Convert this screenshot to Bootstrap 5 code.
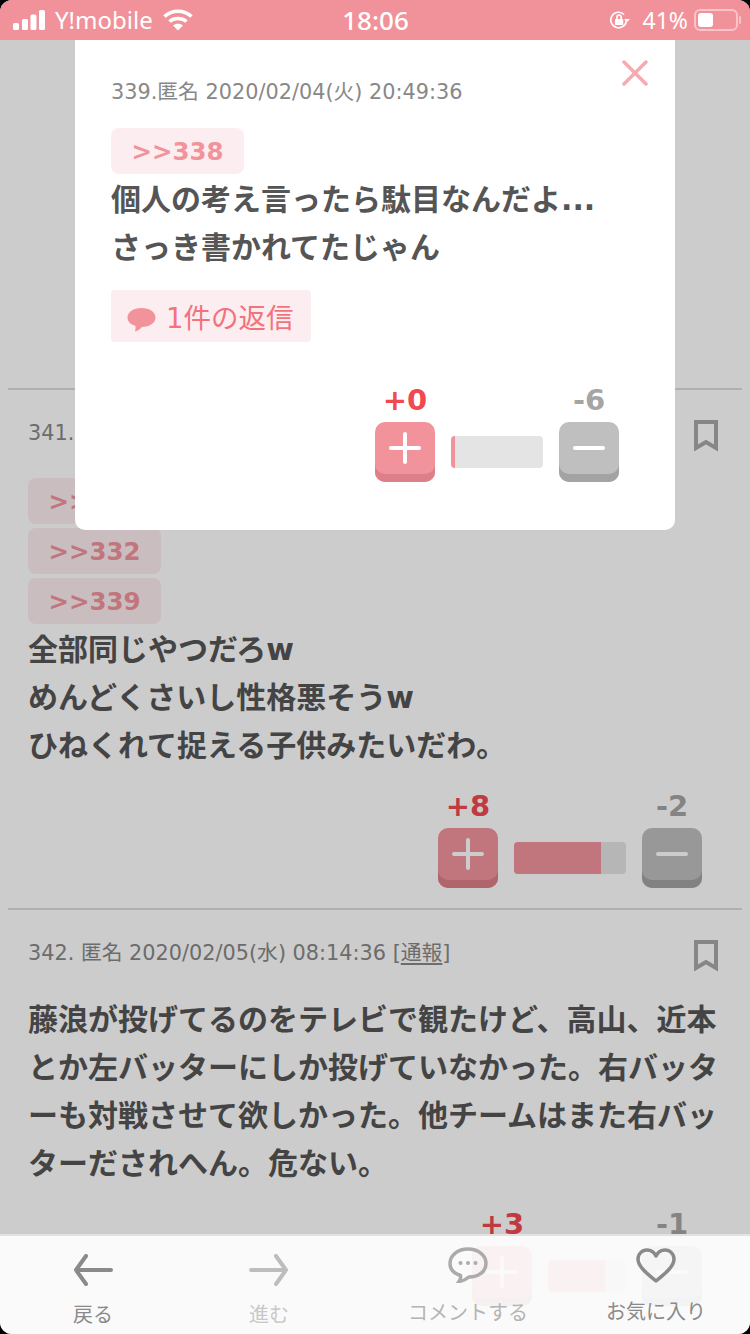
<!DOCTYPE html>
<html lang="ja">
<head>
  <title>掲示板</title>
  <meta name="viewport" content="width=device-width, initial-scale=1.0">
  <link href="https://cdn.jsdelivr.net/npm/bootstrap@5.3.0/dist/css/bootstrap.min.css" rel="stylesheet">
  <script src="https://cdn.jsdelivr.net/npm/bootstrap@5.3.0/dist/js/bootstrap.bundle.min.js"></script>
  <style>
    html, body { height: 1334px; overflow: hidden; background: #000; }
    body {
      font-family: "DejaVu Sans", "Noto Sans CJK JP", sans-serif;
      color: #555;
    }
    .app-screen {
      height: 1334px;
      position: relative;
      overflow: hidden;
      background: #fff;
      border-radius: 12px;
    }
    .status-bar {
      height: 40px;
      background: #f1929a;
      color: #fff;
      padding: 0 12px 0 13px;
      position: relative;
      z-index: 30;
      font-family: "Noto Sans", sans-serif;
      font-size: 24px;
    }
    .status-side { width: 300px; }
    .status-carrier { margin-left: 10px; margin-right: 10px; }
    .status-time { font-size: 26px; font-weight: 500; }
    .status-pct { font-size: 23px; margin: 0 6px 0 12px; }
    .battery { width: 44px; height: 22px; border: 2px solid #f9c3c8; border-radius: 6px; padding: 2px; position: relative; }
    .battery i { display: block; width: 15px; height: 100%; background: #fff; border-radius: 3px; }
    .battery::after { content: ""; position: absolute; right: -5px; top: 5px; width: 2px; height: 8px; background: #f9c3c8; border-radius: 1px; }

    .post-list { padding: 0 8px; }
    .post-item { border-bottom: 2px solid #dcdcdc; padding: 0 20px; position: relative; }
    .post-first { height: 350px; }
    .post-second { height: 520px; padding-top: 30px; }
    .post-third { padding-top: 30px; border-bottom: 0; }
    .post-meta { font-size: 20.800px; line-height: 26px; color: #888; }
    .post-meta u { text-underline-offset: 3px; }
    .mark-icon { position: absolute; right: 24px; top: 30px; }
    .anchor-list { margin-top: 32px; }
    .anchor-tag {
      display: block;
      width: 133px;
      height: 46px;
      background: #fcedf0;
      border-radius: 8px;
      color: #f2939b;
      font: 700 24.5px/48px "DejaVu Sans", sans-serif;
      text-align: center;
    }
    .post-body {
      font-size: 30px;
      line-height: 48px;
      font-weight: 700;
      color: #555;
      margin: 0;
      padding-top: 2px;
    }
    .post-third .post-body { margin-top: 28px; }
    .vote-row { justify-content: flex-end; padding-right: 20px; margin-top: 21px; }
    .vote-col { width: 60px; text-align: center; }
    .vote-num { font: 700 29px/30px "DejaVu Sans", sans-serif; display: block; }
    .vote-plus { color: #f0494f; }
    .vote-minus { color: #a5a5a5; }
    .vote-btn { display: block; width: 60px; height: 60px; margin-top: 7px; border-radius: 10px; }
    .vote-btn svg { display: block; }
    .btn-plus { background: #f2939b; box-shadow: inset 0 -8px 0 #dc7f88; }
    .btn-minus { background: #bfbfbf; box-shadow: inset 0 -8px 0 #a3a3a3; }
    .vote-bar { height: 32px; margin: 51px 16px 0; background: #e4e4e4; border-radius: 4px; overflow: hidden; }
    .vote-bar div { height: 100%; background: #f2939b; }

    .dim-layer { position: absolute; inset: 0; background: rgba(0,0,0,.2); z-index: 10; }

    .popup-box {
      position: absolute;
      left: 75px;
      top: 40px;
      width: 600px;
      height: 490px;
      background: #fff;
      border-radius: 0 0 10px 10px;
      z-index: 20;
      padding: 39px 36px 0;
    }
    .popup-close { position: absolute; right: 27px; top: 20px; }
    .popup-box .anchor-tag { margin-top: 23px; }
    .reply-tag {
      display: flex;
      align-items: center;
      width: 200px;
      height: 52px;
      margin-top: 18px;
      padding: 6px 0 0 16px;
      background: #fcedf0;
      border-radius: 4px;
      color: #f2737c;
      font-size: 27.500px;
      gap: 10px;
    }
    .reply-tag svg { margin-top: 2px; }
    .popup-box .vote-row { margin-top: 43px; }

    .bottom-nav {
      position: absolute;
      left: 0;
      right: 0;
      bottom: 0;
      height: 100px;
      padding-left: 3px;
      background: rgba(255,255,255,.9);
      border-top: 2px solid #e2e2e2;
      z-index: 15;
      font-size: 20px;
    }
    .nav-cell { text-align: center; line-height: 24px; color: #8a8a8a; white-space: nowrap; }
    .nav-cell svg { display: block; margin: 0 auto; }
    .nav-back { width: 180px; }
    .nav-next { width: 172px; color: #c8c8c8; }
    .nav-comment { width: 226px; color: #b4b4b4; }
    .nav-fav { width: 150px; }
    .nav-arrow { margin-top: 18px !important; }
    .nav-arrow + div { margin-top: 17px; }
    .nav-bubble { margin-top: 11px !important; }
    .nav-bubble + div { margin-top: 18px; }
    .nav-heart { margin-top: 12px !important; }
    .nav-heart + div { margin-top: 17px; }
  </style>
</head>
<body>
<div class="app-screen">
  <div class="status-bar d-flex align-items-center justify-content-between">
    <div class="status-side d-flex align-items-center">
      <svg width="32" height="20" viewBox="0 0 32 20"><g fill="#fff"><rect x="0" y="13" width="6" height="7" rx="1.500"/><rect x="9" y="9" width="6" height="11" rx="1.500"/><rect x="17.500" y="4.500" width="6" height="15.500" rx="1.500"/><rect x="26" y="0" width="6" height="20" rx="1.500"/></g></svg>
      <span class="status-carrier">Y!mobile</span>
      <svg width="30" height="22" viewBox="0 0 30 22" fill="none" stroke="#fff" stroke-width="3.600"><path d="M1.500 7.500c7.500-7 19.500-7 27 0"/><path d="M6.500 12.500c4.500-4 12.500-4 17 0"/><path d="M15 21.500l-5-5c2.800-2.200 7.200-2.200 10 0z" fill="#fff" stroke="none"/></svg>
    </div>
    <span class="status-time">18:06</span>
    <div class="status-side d-flex align-items-center justify-content-end">
      <svg width="22" height="22" viewBox="0 0 24 22" fill="none" stroke="#fff" stroke-width="1.800"><path d="M19 11a8.500 8.500 0 1 1-2.500-6"/><path d="M23 10l-3.500 3.500-3-3.500" fill="#fff" stroke="none"/><rect x="6.500" y="10" width="9" height="6.500" rx="1" fill="#fff" stroke="none"/><path d="M8.700 10V8a2.300 2.300 0 0 1 4.600 0v2"/></svg>
      <span class="status-pct">41%</span>
      <div class="battery"><i></i></div>
    </div>
  </div>

  <div class="post-list">
    <section class="post-item post-first"></section>

    <section class="post-item post-second">
      <div class="post-meta">341. 匿名 2020/02/05(水) [<u>通報</u>]</div>
      <svg class="mark-icon" width="24" height="32" viewBox="0 0 24 32" fill="none" stroke="#a8a8a8" stroke-width="4"><path d="M2 2h20v26l-10-6-10 6z"/></svg>
      <div class="anchor-list d-grid gap-1">
        <a class="anchor-tag text-decoration-none">&gt;&gt;331</a>
        <a class="anchor-tag text-decoration-none">&gt;&gt;332</a>
        <a class="anchor-tag text-decoration-none">&gt;&gt;339</a>
      </div>
      <p class="post-body">全部同じやつだろw<br>めんどくさいし性格悪そうw<br>ひねくれて捉える子供みたいだわ。</p>
      <div class="d-flex vote-row">
        <div class="vote-col"><span class="vote-num vote-plus">+8</span><a class="vote-btn btn-plus"><svg width="60" height="52" viewBox="0 0 60 52"><path d="M30 12v28M16 26h28" stroke="#fff" stroke-width="4" stroke-linecap="round"/></svg></a></div>
        <div class="vote-bar" style="width:112px"><div style="width:78%"></div></div>
        <div class="vote-col"><span class="vote-num vote-minus">-2</span><a class="vote-btn btn-minus"><svg width="60" height="52" viewBox="0 0 60 52"><path d="M16 26h28" stroke="#fff" stroke-width="4" stroke-linecap="round"/></svg></a></div>
      </div>
    </section>

    <section class="post-item post-third">
      <div class="post-meta">342. 匿名 2020/02/05(水) 08:14:36 [<u>通報</u>]</div>
      <svg class="mark-icon" width="24" height="32" viewBox="0 0 24 32" fill="none" stroke="#a8a8a8" stroke-width="4"><path d="M2 2h20v26l-10-6-10 6z"/></svg>
      <p class="post-body">藤浪が投げてるのをテレビで観たけど、高山、近本とか左バッターにしか投げていなかった。右バッターも対戦させて欲しかった。他チームはまた右バッターだされへん。危ない。</p>
      <div class="d-flex vote-row">
        <div class="vote-col"><span class="vote-num vote-plus">+3</span><a class="vote-btn btn-plus"><svg width="60" height="52" viewBox="0 0 60 52"><path d="M30 12v28M16 26h28" stroke="#fff" stroke-width="4" stroke-linecap="round"/></svg></a></div>
        <div class="vote-bar" style="width:78px"><div style="width:73%"></div></div>
        <div class="vote-col"><span class="vote-num vote-minus">-1</span><a class="vote-btn btn-minus"><svg width="60" height="52" viewBox="0 0 60 52"><path d="M16 26h28" stroke="#fff" stroke-width="4" stroke-linecap="round"/></svg></a></div>
      </div>
    </section>
  </div>

  <div class="dim-layer"></div>

  <div class="popup-box">
    <svg class="popup-close" width="26" height="26" viewBox="0 0 26 26"><path d="M2 2l22 22M24 2L2 24" stroke="#f7aab0" stroke-width="3.500" stroke-linecap="round"/></svg>
    <div class="post-meta">339.匿名 2020/02/04(火) 20:49:36</div>
    <a class="anchor-tag text-decoration-none">&gt;&gt;338</a>
    <p class="post-body">個人の考え言ったら駄目なんだよ...<br>さっき書かれてたじゃん</p>
    <a class="reply-tag text-decoration-none">
      <svg width="29" height="26" viewBox="0 0 29 26"><path d="M14.500 1C22.500 1 28.500 5 28.500 10.500S22.500 20 15 20c-2 2-4 3.500-7 4.500.5-2 .7-3.500.5-5.500C3.500 17.500.5 14.500.5 10.500.5 5 6.500 1 14.500 1z" fill="#f2939b"/></svg>
      <span>1件の返信</span>
    </a>
    <div class="d-flex vote-row">
      <div class="vote-col"><span class="vote-num vote-plus">+0</span><a class="vote-btn btn-plus"><svg width="60" height="52" viewBox="0 0 60 52"><path d="M30 12v28M16 26h28" stroke="#fff" stroke-width="4" stroke-linecap="round"/></svg></a></div>
      <div class="vote-bar" style="width:92px"><div style="width:4%"></div></div>
      <div class="vote-col"><span class="vote-num vote-minus">-6</span><a class="vote-btn btn-minus"><svg width="60" height="52" viewBox="0 0 60 52"><path d="M16 26h28" stroke="#fff" stroke-width="4" stroke-linecap="round"/></svg></a></div>
    </div>
  </div>

  <nav class="bottom-nav d-flex">
    <div class="nav-cell nav-back">
      <svg class="nav-arrow" width="40" height="32" viewBox="0 0 40 32" fill="none" stroke="#8a8a8a" stroke-width="4" stroke-linecap="round" stroke-linejoin="round"><path d="M38 16H3M13 2L3 16l10 14"/></svg>
      <div>戻る</div>
    </div>
    <div class="nav-cell nav-next">
      <svg class="nav-arrow" width="40" height="32" viewBox="0 0 40 32" fill="none" stroke="#bdbdbd" stroke-width="4" stroke-linecap="round" stroke-linejoin="round"><path d="M2 16h35M27 2l10 14-10 14"/></svg>
      <div>進む</div>
    </div>
    <div class="nav-cell nav-comment">
      <svg class="nav-bubble" width="40" height="36" viewBox="0 0 40 36" fill="none" stroke="#ababab" stroke-width="3.500"><path d="M20 2c10 0 18 6 18 14.500S30 30 21 30c-3 2.500-6 4-10 4.500 1.500-2 2-3.500 1.500-6C6 26.500 2 22 2 16.500 2 8 10 2 20 2z"/><g fill="#ababab" stroke="none"><circle cx="12.500" cy="16" r="2"/><circle cx="20" cy="16" r="2"/><circle cx="27.500" cy="16" r="2"/></g></svg>
      <div>コメントする</div>
    </div>
    <div class="nav-cell nav-fav">
      <svg class="nav-heart" width="40" height="35" viewBox="0 0 40 35" fill="none" stroke="#8a8a8a" stroke-width="3.500" stroke-linejoin="round"><path d="M20 33C9 24 2 18 2 11 2 6 6 2 11 2c4 0 7 2 9 6 2-4 5-6 9-6 5 0 9 4 9 9 0 7-7 13-18 22z"/></svg>
      <div>お気に入り</div>
    </div>
  </nav>
</div>
</body>
</html>
